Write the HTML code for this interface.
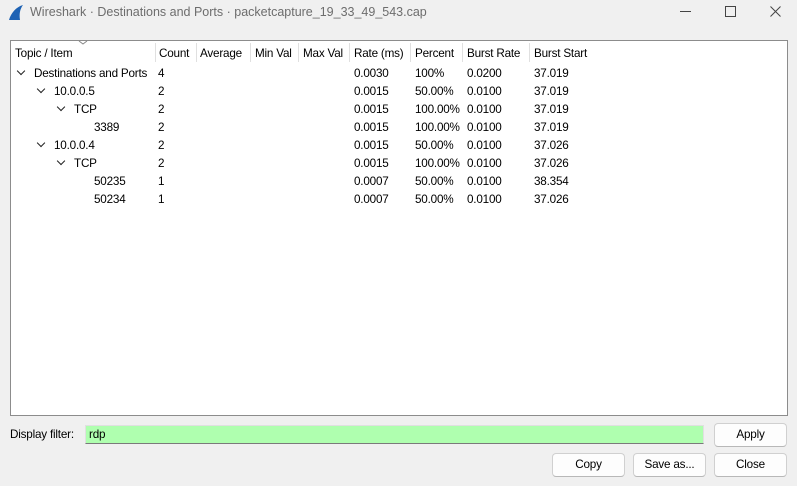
<!DOCTYPE html>
<html><head><style>
body{margin:0;width:797px;height:486px;background:#f0f0f0;font-family:"Liberation Sans",sans-serif;font-size:12px;color:#000;position:relative;overflow:hidden}
.t{position:absolute;white-space:nowrap}
.box{position:absolute;left:10px;top:40px;width:776px;height:374px;background:#fff;border:1px solid #8c8c8c}
.sep{position:absolute;top:43px;width:1px;height:19px;background:#e0e0e0}
.btn{position:absolute;height:22px;background:#fdfdfd;border:1px solid #d0d0d0;border-bottom-color:#b8b8b8;border-radius:4px;text-align:center;line-height:22px}
.chev{position:absolute;width:5px;height:5px;border-right:1.6px solid #222;border-bottom:1.6px solid #222;transform:rotate(45deg)}
.sm{font-size:11.7px;letter-spacing:-0.2px}
.r{line-height:18px}
</style></head><body>
<svg style="position:absolute;left:7px;top:4px" width="18" height="17"><path d="M2 16 C4 9 9 3 16 1 C13 5 12 10 13 16 Z" fill="#1e62b4"/></svg>
<div class="t" style="left:30px;top:5px;color:#6d6d6d;font-size:12.5px">Wireshark · Destinations and Ports · packetcapture_19_33_49_543.cap</div>
<div style="position:absolute;left:680px;top:11px;width:11px;height:1px;background:#444"></div>
<div style="position:absolute;left:725px;top:6px;width:9px;height:9px;border:1px solid #444"></div>
<svg style="position:absolute;left:770px;top:6px" width="11" height="11"><path d="M0.5 0.5 L10.5 10.5 M10.5 0.5 L0.5 10.5" stroke="#444" stroke-width="1"/></svg>
<div class="box"></div>
<svg style="position:absolute;left:78px;top:40px" width="10" height="6"><path d="M1 1 L5 4 L9 1" stroke="#888" fill="none"/></svg>
<div class="sep" style="left:155px"></div><div class="sep" style="left:196px"></div><div class="sep" style="left:250px"></div><div class="sep" style="left:298px"></div><div class="sep" style="left:349px"></div><div class="sep" style="left:410px"></div><div class="sep" style="left:462px"></div><div class="sep" style="left:529px"></div>
<div class="t sm" style="left:15px;top:47px">Topic / Item</div>
<div class="t sm" style="left:159px;top:47px">Count</div>
<div class="t sm" style="left:200px;top:47px">Average</div>
<div class="t sm" style="left:255px;top:47px">Min Val</div>
<div class="t sm" style="left:303px;top:47px">Max Val</div>
<div class="t sm" style="left:354px;top:47px">Rate (ms)</div>
<div class="t sm" style="left:415px;top:47px">Percent</div>
<div class="t sm" style="left:467px;top:47px">Burst Rate</div>
<div class="t sm" style="left:534px;top:47px">Burst Start</div>

<div class="chev" style="left:18px;top:68px"></div>
<div class="chev" style="left:38px;top:86px"></div>
<div class="chev" style="left:58px;top:104px"></div>
<div class="chev" style="left:38px;top:140px"></div>
<div class="chev" style="left:58px;top:158px"></div>

<div class="t sm r" style="left:34px;top:65px">Destinations and Ports</div>
<div class="t sm r" style="left:54px;top:83px">10.0.0.5</div>
<div class="t sm r" style="left:74px;top:101px">TCP</div>
<div class="t sm r" style="left:94px;top:119px">3389</div>
<div class="t sm r" style="left:54px;top:137px">10.0.0.4</div>
<div class="t sm r" style="left:74px;top:155px">TCP</div>
<div class="t sm r" style="left:94px;top:173px">50235</div>
<div class="t sm r" style="left:94px;top:191px">50234</div>

<div class="t sm r" style="left:158px;top:65px">4<br>2<br>2<br>2<br>2<br>2<br>1<br>1</div>
<div class="t sm r" style="left:354px;top:65px">0.0030<br>0.0015<br>0.0015<br>0.0015<br>0.0015<br>0.0015<br>0.0007<br>0.0007</div>
<div class="t sm r" style="left:415px;top:65px">100%<br>50.00%<br>100.00%<br>100.00%<br>50.00%<br>100.00%<br>50.00%<br>50.00%</div>
<div class="t sm r" style="left:467px;top:65px">0.0200<br>0.0100<br>0.0100<br>0.0100<br>0.0100<br>0.0100<br>0.0100<br>0.0100</div>
<div class="t sm r" style="left:534px;top:65px">37.019<br>37.019<br>37.019<br>37.019<br>37.026<br>37.026<br>38.354<br>37.026</div>

<div class="t sm" style="left:10px;top:428px">Display filter:</div>
<div style="position:absolute;left:85px;top:425px;width:617px;height:17px;background:#afffaf;border:1px solid #e0e0e0;border-bottom:1px solid #7a7a7a"></div>
<div class="t sm" style="left:89px;top:428px">rdp</div>
<div class="btn sm" style="left:714px;top:423px;width:71px">Apply</div>
<div class="btn sm" style="left:552px;top:453px;width:71px">Copy</div>
<div class="btn sm" style="left:633px;top:453px;width:71px">Save as...</div>
<div class="btn sm" style="left:714px;top:453px;width:71px">Close</div>
</body></html>
